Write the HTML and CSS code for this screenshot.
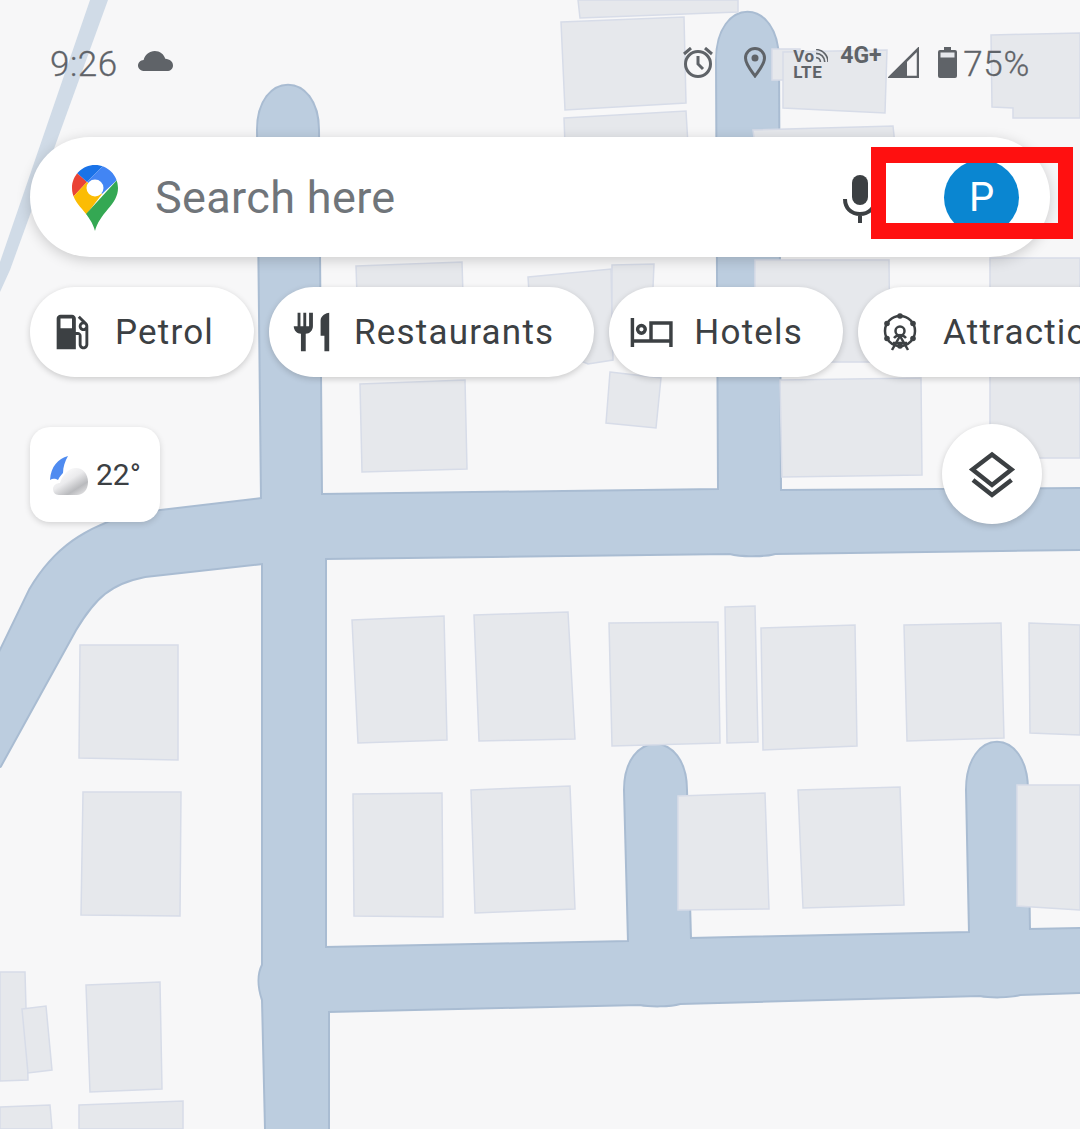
FILE: index.html
```html
<!DOCTYPE html>
<html lang="en">
<head>
<meta charset="utf-8">
<title>Maps</title>
<link rel="stylesheet" href="styles.css">
</head>
<body>
<div class="screen">
  <svg class="map" viewBox="0 0 1080 1129" width="1080" height="1129" aria-hidden="true">
    <defs>
      <g id="roads">
        <path d="M258 130 C258 71 318 71 318 130 L321 495 L719 490 L717 60 C717 -3 778 -3 778 60 L780 491 L1080 489 L1080 549 L775 553 C765 556 740 556 730 553 L325 558 L325 948 L629 942 L625 790 C625 730 686 730 686 790 L690 939 L970 933 L967 790 C967 727 1027 727 1027 790 L1029 930 L1080 929 L1080 992 L1020 994 C1010 997 990 997 980 995 L680 1003 C670 1006 650 1006 640 1004 L328 1011 L328 1129 L266 1129 L263 1000 C258 985 258 975 263 965 L263 563 L145 576 C110 583 95 597 75 630 L0 766 L0 652 L30 590 C55 548 85 528 135 514 L262 499 Z"/>
      </g>
    </defs>
    <rect class="ground" width="1080" height="1129"/>
    <polygon class="minor" points="90,0 108,0 10,270 0,292 0,262"/>
    <use href="#roads" class="road-edge"/>
    <use href="#roads" class="road-fill"/>
    <g class="buildings">
      <polygon points="578,0 738,0 738,12 580,18"/>
      <polygon points="561,22 684,17 686,103 565,110"/>
      <polygon points="564,118 686,111 688,145 565,145"/>
      <polygon points="772,49 800,49 800,80 772,80"/>
      <polygon points="783,52 887,50 885,113 783,108"/>
      <polygon points="991,35 1080,33 1080,118 1013,118 1013,108 992,107"/>
      <polygon points="753,130 893,126 895,145 755,145"/>
      <polygon points="356,266 462,262 463,295 357,295"/>
      <polygon points="528,277 611,269 613,360 588,364 532,340"/>
      <polygon points="612,265 654,264 651,335 612,332"/>
      <polygon points="755,260 889,260 890,362 755,362"/>
      <polygon points="990,258 1080,258 1080,458 990,458"/>
      <polygon points="360,384 465,380 467,469 362,472"/>
      <polygon points="610,372 661,378 656,428 606,423"/>
      <polygon points="780,380 921,378 922,475 782,477"/>
      <polygon points="352,620 444,616 447,740 358,743"/>
      <polygon points="474,615 568,612 575,739 479,741"/>
      <polygon points="609,623 718,622 720,743 612,746"/>
      <polygon points="725,607 755,606 758,742 727,743"/>
      <polygon points="761,628 855,625 857,746 763,750"/>
      <polygon points="904,625 1001,623 1004,738 907,741"/>
      <polygon points="1029,623 1080,625 1080,735 1030,733"/>
      <polygon points="80,645 178,645 178,760 79,758"/>
      <polygon points="83,792 181,792 180,916 81,915"/>
      <polygon points="353,794 442,793 443,917 354,916"/>
      <polygon points="471,790 570,786 575,909 475,913"/>
      <polygon points="678,796 765,793 769,909 678,910"/>
      <polygon points="798,790 900,787 904,905 803,908"/>
      <polygon points="1017,785 1080,785 1080,910 1017,906"/>
      <polygon points="0,972 25,972 28,1080 0,1081"/>
      <polygon points="22,1009 46,1006 52,1070 28,1073"/>
      <polygon points="86,985 160,982 162,1089 90,1092"/>
      <polygon points="0,1107 50,1105 52,1129 0,1129"/>
      <polygon points="79,1105 183,1101 183,1129 79,1129"/>
    </g>
  </svg>

  <div class="overlay">
    <header class="status">
      <div class="status-left">
        <span class="clock">9:26</span>
        <svg class="ic-cloud" viewBox="0 0 35 20"><path d="M7 20C3 20 0 17.6 0 14.4 0 11.4 2.5 9.2 5.600 8.900 7 3.700 11.500 0 16.800 0c5 0 9.200 3.200 10.500 7.800C31.700 8.200 35 10.800 35 14.400 35 17.600 32.400 20 29 20Z"/></svg>
      </div>
      <div class="status-right">
        <svg class="ic-alarm" viewBox="0 0 30 31"><circle cx="15" cy="17" r="12.500"/><path d="M15 9v8l5 5M1 7l7-6M29 7l-7-6"/></svg>
        <svg class="ic-loc" viewBox="0 0 22 31"><path d="M11 29C6 22 1.500 17 1.500 11a9.500 9.500 0 0 1 19 0C20.500 17 16 22 11 29Z"/><circle cx="11" cy="11" r="3.500"/></svg>
        <div class="volte"><span class="vo">Vo<svg class="ic-waves" viewBox="0 0 12 12"><path d="M1 4a8 8 0 0 1 8 8M1 8a4 4 0 0 1 4 4M1 0.500a11.500 11.500 0 0 1 11 11.500"/></svg></span><span>LTE</span></div>
        <span class="net">4G+</span>
        <svg class="ic-signal" viewBox="0 0 31 31"><path class="sig-line" d="M2 30 30 2v28Z"/><path class="sig-fill" d="M0 31 19 12v19Z"/></svg>
        <svg class="ic-batt" viewBox="0 0 19 31"><path d="M6 0h7v3h4a2 2 0 0 1 2 2v24a2 2 0 0 1-2 2H2a2 2 0 0 1-2-2V5a2 2 0 0 1 2-2h4Z"/><rect class="batt-gap" x="2.500" y="5.500" width="14" height="5"/></svg>
        <span class="pct">75%</span>
      </div>
    </header>

    <div class="search">
      <svg class="logo" viewBox="0 0 46 66">
        <defs><clipPath id="pin"><path d="M23 0C35.700 0 46 10.300 46 23 46 31 42 37 36 44 30 51 25 58 23 66 21 58 16 51 10 44 4 37 0 31 0 23 0 10.300 10.300 0 23 0Z"/></clipPath></defs>
        <g clip-path="url(#pin)">
          <polygon fill="#ea4335" points="-1,8 5,8 15,17 0,33 -1,33"/>
          <polygon fill="#1a73e8" points="5,8 15,17 33,-1 5,-1"/>
          <polygon fill="#4285f4" points="33,-1 15,17 30,29 47,13 47,-1"/>
          <polygon fill="#fbbc04" points="15,17 0,33 0,42 14,50 30,29"/>
          <polygon fill="#34a853" points="47,13 14,49 14,70 47,70"/>
          <circle fill="#fff" cx="23" cy="23" r="8.500"/>
        </g>
      </svg>
      <span class="placeholder">Search here</span>
      <svg class="mic" viewBox="0 0 34 48"><rect x="9" y="0" width="16" height="30" rx="8"/><path class="mic-arc" d="M2 24c0 9 6 15 15 15s15-6 15-15M17 39v9"/></svg>
      <div class="avatar">P</div>
    </div>
    <div class="highlight"></div>

    <nav class="chips">
      <div class="chip">
        <svg class="chip-ic" viewBox="0 0 24 24"><path d="M19.770 7.230l.01-.01-3.720-3.720L15 4.560l2.110 2.110c-.94.36-1.610 1.260-1.610 2.330 0 1.380 1.120 2.500 2.500 2.500.36 0 .69-.08 1-.21v7.210c0 .55-.45 1-1 1s-1-.45-1-1V14c0-1.100-.9-2-2-2h-1V5c0-1.100-.9-2-2-2H6c-1.100 0-2 .9-2 2v16h10v-7.500h1.500v5c0 1.380 1.120 2.500 2.500 2.500s2.500-1.120 2.500-2.500V9c0-.69-.28-1.320-.73-1.770zM12 10H6V5h6v5zm6 0c-.55 0-1-.45-1-1s.45-1 1-1 1 .45 1 1-.45 1-1 1z"/></svg>
        <span>Petrol</span>
      </div>
      <div class="chip">
        <svg class="chip-ic" viewBox="0 0 24 24"><path d="M11 9H9.500V2H8v7H6.500V2H5v7H3V2v7c0 2.120 1.660 3.840 3.750 3.970V22h2.500v-9.030C11.340 12.840 13 11.120 13 9V2h-2v7zm6-3v8h2v8h2.500V2C20 2 17 3.500 17 6z"/></svg>
        <span>Restaurants</span>
      </div>
      <div class="chip">
        <svg class="chip-ic bed" viewBox="0 0 24 24"><path d="M2.300 4.700v15.100M2.300 16.700h20.100M22.400 19.800V7.300H12v9.400"/><circle cx="7" cy="10.600" r="2"/></svg>
        <span>Hotels</span>
      </div>
      <div class="chip">
        <svg class="chip-ic wheel" viewBox="0 0 46 46"><circle cx="23" cy="22" r="15"/><circle cx="23" cy="22" r="4.500"/><path d="M15 41 23 27l8 14M16 34h14M17 29a8 8 0 0 1 12 0"/><g class="wheel-dots"><circle cx="23" cy="7" r="2.800"/><circle cx="10" cy="14.500" r="2.800"/><circle cx="36" cy="14.500" r="2.800"/><circle cx="10" cy="29.500" r="2.800"/><circle cx="36" cy="29.500" r="2.800"/><circle cx="23" cy="37" r="2.800"/></g></svg>
        <span>Attractions</span>
      </div>
    </nav>

    <div class="widgets">
      <div class="weather">
        <svg class="ic-weather" viewBox="0 0 40 40">
          <defs><linearGradient id="cl" x1="0.100" y1="0.100" x2="0.800" y2="0.950"><stop offset="0" stop-color="#ffffff"/><stop offset=".45" stop-color="#ebebed"/><stop offset=".8" stop-color="#b9babd"/><stop offset="1" stop-color="#d8d8da"/></linearGradient></defs>
          <path fill="#4f8bf0" d="M20 1C10 4 3 11 2 25 5 23 8 24 10 25 12 21 14 19 15 18 15 12 17 6 20 1Z"/>
          <path fill="url(#cl)" d="M11 40C7 40 5 37 5 34 5 30 9 28 12 28 14 21 20 13 28 13 35 13 40 19 40 27 40 35 35 40 29 40Z"/>
        </svg>
        <span class="temp">22°</span>
      </div>
      <div class="layers">
        <svg class="ic-layers" viewBox="0 0 48 48"><path d="M24 4.500 43.500 19.500 24 35 4.500 19.500ZM5 30 24 45 43.500 30"/></svg>
      </div>
    </div>
  </div>
</div>
</body>
</html>
```
FILE: styles.css
```css
* { box-sizing: border-box; }
html, body { margin: 0; padding: 0; }
body { background: #f7f7f8; font-family: Roboto, "Open Sans", sans-serif; }

.screen { position: relative; width: 1080px; height: 1129px; overflow: hidden; }

/* Map canvas */
.map { position: absolute; left: 0; top: 0; filter: blur(.5px); }
.ground { fill: #f7f7f8; }
.minor { fill: #d0dbe7; }
.road-edge { fill: #a9bcd2; stroke: #a9bcd2; stroke-width: 4; stroke-linejoin: round; }
.road-fill { fill: #bccddf; }
.buildings polygon { fill: #e6e8ec; stroke: #d7dce8; stroke-width: 1.500; }

.overlay { position: relative; display: flex; flex-direction: column; }

/* Status bar */
.status { display: flex; justify-content: space-between; height: 137px; padding: 47px 50px 0 50px; color: #5f6368; }
.status-left, .status-right { display: flex; align-items: flex-start; }
.clock { font-size: 35px; font-weight: 300; line-height: 36px; letter-spacing: .5px; -webkit-text-stroke: .3px #5f6368; }
.ic-cloud { width: 35px; height: 20px; margin: 4px 0 0 20px; fill: #5f6368; }
.ic-alarm { width: 30px; height: 31px; fill: none; stroke: #5f6368; stroke-width: 3; }
.ic-loc { width: 22px; height: 31px; margin-left: 31px; fill: none; stroke: #5f6368; stroke-width: 3; }
.ic-loc circle { fill: #5f6368; stroke: none; }
.volte { display: flex; flex-direction: column; width: 35px; margin-left: 27px; margin-top: 1px; font-size: 17px; font-weight: 700; line-height: 16px; letter-spacing: .6px; }
.vo { display: flex; align-items: flex-end; }
.ic-waves { width: 13px; height: 13px; fill: none; stroke: #5f6368; stroke-width: 1.500; margin-bottom: 2px; }
.net { width: 42px; margin-left: 12px; font-size: 23px; font-weight: 700; line-height: 18px; }
.ic-signal { width: 31px; height: 31px; margin-left: 6px; }
.sig-line { fill: none; stroke: #5f6368; stroke-width: 2.500; }
.sig-fill { fill: #5f6368; }
.ic-batt { width: 19px; height: 31px; margin-left: 19px; fill: #5f6368; }
.batt-gap { fill: #e6e8ec; }
.pct { margin-left: 6px; font-size: 35px; font-weight: 300; line-height: 36px; letter-spacing: .7px; -webkit-text-stroke: .3px #5f6368; }

/* Search bar */
.search { display: flex; align-items: center; height: 120px; margin: 0 30px; padding: 0 31px 0 42px; background: #fff; border-radius: 60px; box-shadow: 0 3px 14px rgba(0, 0, 0, .18); }
.logo { width: 46px; height: 66px; flex: none; margin-top: 1px; }
.placeholder { flex: 1; margin-left: 37px; font-size: 45px; letter-spacing: .35px; color: #70757a; line-height: 1; }
.mic { width: 34px; height: 48px; fill: #3c4043; margin-right: 67px; margin-top: 3px; }
.mic-arc { fill: none; stroke: #3c4043; stroke-width: 4; }
.avatar { display: flex; align-items: center; justify-content: center; width: 75px; height: 75px; border-radius: 50%; background: #0a86d1; color: #fff; font-size: 40px; }

/* Red annotation rectangle */
.highlight { position: absolute; left: 871px; top: 147px; width: 202px; height: 92px; border: solid #ff1010; border-width: 16px 15px; }

/* Category chips */
.chips { display: flex; gap: 15px; margin: 30px 0 0 30px; }
.chip { display: flex; align-items: center; flex: none; height: 90px; padding: 0 40px 0 19px; background: #fff; border-radius: 45px; box-shadow: 0 2px 6px rgba(0, 0, 0, .18); font-size: 35px; color: #3c4043; letter-spacing: 1.2px; }
.chip-ic { width: 46px; height: 46px; margin-right: 20px; fill: #3c4043; }
.bed { fill: none; stroke: #3c4043; stroke-width: 1.800; }
.wheel { fill: none; stroke: #3c4043; stroke-width: 2.500; }
.wheel-dots { fill: #3c4043; stroke: none; }

/* Weather and layers */
.widgets { display: flex; justify-content: space-between; align-items: flex-start; margin-top: 47px; padding: 0 38px 0 30px; }
.weather { display: flex; align-items: center; width: 130px; height: 95px; margin-top: 3px; padding-left: 18px; background: #fff; border-radius: 20px; box-shadow: 0 2px 6px rgba(0, 0, 0, .15); }
.ic-weather { width: 40px; height: 40px; }
.temp { margin-left: 8px; font-size: 30px; color: #3c4043; }
.layers { display: flex; align-items: center; justify-content: center; width: 100px; height: 100px; border-radius: 50%; background: #fff; box-shadow: 0 2px 6px rgba(0, 0, 0, .18); }
.ic-layers { width: 48px; height: 48px; fill: none; stroke: #3c4043; stroke-width: 4.500; }
```
